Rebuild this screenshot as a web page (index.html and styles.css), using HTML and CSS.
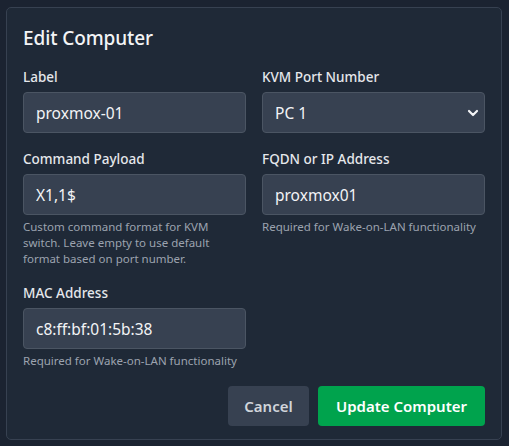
FILE: index.html
```html
<!DOCTYPE html>
<html>
<head>
<meta charset="utf-8">
<link rel="stylesheet" href="styles.css">
</head>
<body>
<div class="card">
  <h2 class="title">Edit Computer</h2>
  <div class="grid">
    <div class="field">
      <label class="label">Label</label>
      <input class="input" type="text" value="proxmox-01">
    </div>
    <div class="field">
      <label class="label">KVM Port Number</label>
      <div class="select-wrap">
        <select class="input select"><option>PC 1</option></select>
        <svg class="chevron" width="12" height="8" viewBox="0 0 12 8"><path d="M2 2 L6 6 L10 2" fill="none" stroke="#f3f4f6" stroke-width="2.2" stroke-linecap="round" stroke-linejoin="round"/></svg>
      </div>
    </div>
    <div class="field">
      <label class="label">Command Payload</label>
      <input class="input" type="text" value="X1,1$">
      <p class="help">Custom command format for KVM switch. Leave empty to use default format based on port number.</p>
    </div>
    <div class="field">
      <label class="label">FQDN or IP Address</label>
      <input class="input" type="text" value="proxmox01">
      <p class="help">Required for Wake-on-LAN functionality</p>
    </div>
    <div class="field">
      <label class="label">MAC Address</label>
      <input class="input" type="text" value="c8:ff:bf:01:5b:38">
      <p class="help">Required for Wake-on-LAN functionality</p>
    </div>
  </div>
  <div class="actions">
    <button class="btn btn-cancel">Cancel</button>
    <button class="btn btn-primary">Update Computer</button>
  </div>
</div>
</body>
</html>
```
FILE: styles.css
```css
* { box-sizing: border-box; }
html, body { margin: 0; padding: 0; }
body {
  background: #1b2331;
  font-family: "Noto Sans", "Open Sans", sans-serif;
  color: #e5e7eb;
  padding: 7px 7px 6px 6px;
  height: 446px;
}
.card {
  background: #1f2937;
  border: 1px solid #374151;
  border-radius: 5px;
  padding: 16px 16px 14px 16px;
  height: 433px;
}
.title {
  margin: 0 0 15px 0;
  font-size: 19px;
  line-height: 28px;
  font-weight: 500;
  color: #f3f4f6;
  letter-spacing: -0.1px;
}
.grid {
  display: grid;
  grid-template-columns: 1fr 1fr;
  column-gap: 16px;
  row-gap: 16px;
  align-items: start;
}
.field { display: flex; flex-direction: column; }
.label {
  font-size: 13.5px;
  line-height: 20px;
  font-weight: 500;
  color: #e5e7eb;
  margin-bottom: 5px;
}
.input {
  height: 41px;
  width: 100%;
  background: #374151;
  border: 1px solid #4b5563;
  border-radius: 4px;
  color: #f3f4f6;
  font-family: inherit;
  font-size: 15.5px;
  padding: 0 12px;
  outline: none;
}
.select-wrap { position: relative; }
.select {
  appearance: none;
  -webkit-appearance: none;
}
.chevron {
  position: absolute;
  right: 6px;
  top: 17px;
  pointer-events: none;
}
.help {
  margin: 4px 0 0 0;
  font-size: 11.5px;
  line-height: 16px;
  color: #9ca3af;
}
.actions {
  display: flex;
  justify-content: flex-end;
  gap: 9px;
  margin-top: 17px;
}
.btn {
  height: 40px;
  border: none;
  border-radius: 4px;
  font-family: inherit;
  font-size: 15px;
  font-weight: 600;
  padding: 0;
  white-space: nowrap;
  text-align: center;
}
.btn-cancel { background: #374151; color: #d1d5db; width: 81px; }
.btn-primary { background: #00a34d; color: #ffffff; width: 167px; }
```
